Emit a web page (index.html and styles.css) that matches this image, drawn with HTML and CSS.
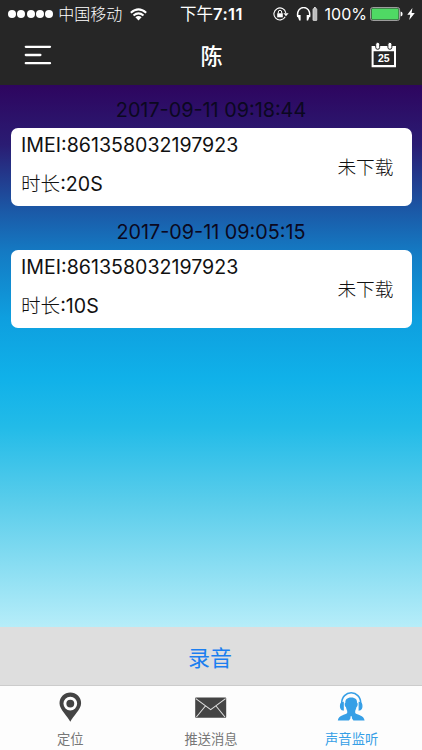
FILE: index.html
```html
<!DOCTYPE html>
<html lang="zh-CN">
<head>
  <meta charset="UTF-8" />
  <meta name="viewport" content="width=device-width, initial-scale=1" />
  <title>声音监听</title>
  <link rel="stylesheet" href="styles.css">
</head>
<body>
  <div class="app">
    <div class="status-bar">
      <div class="status-left">
        <div class="signal"><i></i><i></i><i></i><i></i><i></i></div>
        <span class="carrier">中国移动</span>
        <svg class="wifi" width="17" height="13" viewBox="0 0 17 13" fill="none" stroke="#fff" stroke-width="2">
          <path d="M.8 4.8 Q8.5 -2.1 16.2 4.8" />
          <path d="M3.5 7.6 Q8.5 3.2 13.5 7.6" />
          <path d="M5.4 9.3 Q8.5 6.8 11.6 9.3 L8.5 12.4 Z" fill="#fff" stroke="none" />
        </svg>
      </div>
      <span class="time">下午<b>7:11</b></span>
      <div class="status-right">
        <svg class="lock" width="16" height="14" viewBox="0 0 16 14">
          <path d="M12.2 9.8 A6 6 0 1 1 12.8 5.8" fill="none" stroke="#fff" stroke-width="1.1" />
          <path d="M10.4 6.2 H15.6 L13 9.2 Z" fill="#fff" />
          <rect x="4.2" y="6.3" width="5.6" height="4" fill="#fff" />
          <path d="M5.3 6.5 V5 a1.7 1.7 0 0 1 3.4 0 V6.5" fill="none" stroke="#fff" stroke-width="1" />
        </svg>
        <svg class="headset" width="22" height="14" viewBox="0 0 22 14">
          <path d="M1.8 10 C-.6 -2.6 15.9 -2.6 13.5 10" fill="none" stroke="#fff" stroke-width="1.5" />
          <path d="M1.2 8 H4.6 V13.4 H3.2 Z M14.1 8 H10.7 V13.4 H12.1 Z" fill="#fff" />
          <rect x="17" y="1.6" width="3.8" height="12" rx=".6" fill="#bbb" stroke="#ddd" stroke-width=".8" />
          <rect x="18" y="0" width="1.8" height="1.3" fill="#ddd" />
        </svg>
        <span class="percent">100%</span>
        <svg class="battery" width="33" height="14" viewBox="0 0 33 14">
          <rect x=".6" y=".6" width="29" height="12.8" rx="2" fill="none" stroke="#aaa" stroke-width="1" />
          <rect x="1.6" y="1.6" width="27" height="10.8" rx="1" fill="#4fd964" />
          <path d="M30.6 4.6 q2 .2 2 2.4 t-2 2.4 z" fill="#fff" />
        </svg>
        <svg class="bolt" width="8" height="12" viewBox="0 0 8 12">
          <path d="M5.4 0 L.3 6.7 H3.3 L2.2 12 L7.8 4.9 H4.6 Z" fill="#fff" />
        </svg>
      </div>
    </div>

    <header class="nav-bar">
      <svg class="menu" width="28" height="20" viewBox="0 0 28 20" stroke="#fff" stroke-width="2.3" stroke-linecap="round">
        <path d="M1.8 1.8 H26 M1.8 10 H16.4 M1.8 18.2 H26" />
      </svg>
      <h1>陈</h1>
      <svg class="calendar" width="26" height="26" viewBox="0 0 26 26">
        <path d="M.6 4 H25 V25.2 H.6 Z M2.6 9.3 V23 H23 V9.3 Z" fill="#fff" fill-rule="evenodd" />
        <rect x="4.7" y=".3" width="4" height="7" rx="2" fill="#fff" stroke="#262626" stroke-width="1" />
        <rect x="16.9" y=".3" width="4" height="7" rx="2" fill="#fff" stroke="#262626" stroke-width="1" />
        <text x="12.8" y="19.8" text-anchor="middle">25</text>
      </svg>
    </header>

    <main class="records">
      <div class="record">
        <p class="date">2017-09-11 09:18:44</p>
        <div class="card">
          <div class="info">
            <p class="imei">IMEI:861358032197923</p>
            <p class="duration"><span>时长</span>:20S</p>
          </div>
          <span class="state">未下载</span>
        </div>
      </div>
      <div class="record">
        <p class="date">2017-09-11 09:05:15</p>
        <div class="card">
          <div class="info">
            <p class="imei">IMEI:861358032197923</p>
            <p class="duration"><span>时长</span>:10S</p>
          </div>
          <span class="state">未下载</span>
        </div>
      </div>
    </main>

    <button class="record-btn">录音</button>

    <nav class="tab-bar">
      <a class="tab">
        <svg width="30" height="30" viewBox="0 0 30 30">
          <path d="M15.3 29.8 C12.8 24 4.5 17.8 4.5 11.2 A10.8 10.8 0 0 1 26.1 11.2 C26.1 17.8 17.8 24 15.3 29.8 Z" fill="#444" />
          <circle cx="15.3" cy="11.6" r="5.4" fill="#444" stroke="#fff" stroke-width="2.9" />
        </svg>
        <span>定位</span>
      </a>
      <a class="tab">
        <svg width="32" height="30" viewBox="0 0 32 30">
          <rect x=".2" y="5.6" width="31" height="20.2" rx=".8" fill="#444" />
          <path d="M.8 6.6 L15.7 17.6 L30.6 6.6 M1.4 25 L10.4 14 M30 25 L21 14" fill="none" stroke="#ddd" stroke-width="1.1" />
        </svg>
        <span>推送消息</span>
      </a>
      <a class="tab active">
        <svg width="30" height="30" viewBox="0 0 30 30" fill="#369fe6">
          <path d="M4.6 12 C4.4 -2.9 24 -2.9 23.8 12" fill="none" stroke="#369fe6" stroke-width="1.5" />
          <path d="M6.2 10.4 V18 C2.8 17.4 2.4 11 6.2 10.4 Z M22.2 10.4 V18 C25.6 17.4 26 11 22.2 10.4 Z" stroke="#369fe6" stroke-width="1.2" />
          <path d="M14.2 5.4 C18.6 5.4 20.3 7.8 20 10.8 C21.1 10.8 20.8 14.6 19.5 15 C19.1 17 18.6 18 18.2 18.8 V21 C20 23.2 27 22.8 27.6 28.6 H16.4 L15 26.4 L14.8 24.2 H13.6 L13.4 26.4 L12 28.6 H.8 C1.4 22.8 8.4 23.2 10.2 21 V18.8 C9.8 18 9.3 17 8.9 15 C7.6 14.6 7.3 10.8 8.4 10.8 C8.1 7.8 9.8 5.4 14.2 5.4 Z" />
        </svg>
        <span>声音监听</span>
      </a>
    </nav>
  </div>
</body>
</html>
```
FILE: styles.css
```css
* {
  box-sizing: border-box;
}

body {
  margin: 0;
  font-family: Inter, "Noto Sans CJK SC", sans-serif;
  color: #111;
}

h1, p {
  margin: 0;
}

svg {
  display: block;
  flex: none;
}

.app {
  display: flex;
  flex-direction: column;
  width: 422px;
  height: 750px;
  overflow: hidden;
}

/* status bar */
.status-bar {
  display: grid;
  grid-template-columns: 1fr auto 1fr;
  align-items: center;
  height: 28px;
  padding: 0 7px 0 8px;
  background: #262626;
  color: #fff;
  font-size: 16px;
  line-height: 28px;
  white-space: nowrap;
}

.status-left,
.status-right {
  display: flex;
  align-items: center;
}

.status-right {
  justify-content: flex-end;
}

.signal {
  display: flex;
  gap: 1.3px;
}

.signal i {
  width: 8px;
  height: 8px;
  border-radius: 50%;
  background: #fff;
}

.carrier {
  margin: 0 8px 0 5px;
  font-weight: 300;
}

.time {
  font-size: 16.5px;
}

.time b {
  font-weight: 600;
  letter-spacing: 0.4px;
}

.lock {
  margin-right: 7px;
}

.percent {
  margin-left: 7px;
}

.battery {
  margin: 0 4px 0 3px;
}

/* title bar */
.nav-bar {
  display: flex;
  align-items: center;
  justify-content: space-between;
  height: 57px;
  padding: 0 25px 3px 24px;
  background: #262626;
  color: #fff;
}

.nav-bar h1 {
  padding-top: 2px;
  font-size: 22px;
  font-weight: 500;
  line-height: 30px;
}

.calendar text {
  font-family: "Liberation Sans", sans-serif;
  font-size: 10.5px;
  font-weight: bold;
  fill: #fff;
}

/* record list */
.records {
  flex: 1;
  padding: 0 10.5px;
  background: linear-gradient(#2e055f 0%, #2a1c73 11%, #1b58a6 23%, #147bc4 31%, #0e9fdf 43%, #10b1e9 54%, #22bbe8 63%, #5acdeb 77%, #b6edf9 100%);
}

.record {
  height: 121.5px;
}

.date {
  height: 43px;
  padding-top: 4px;
  font-size: 19.8px;
  line-height: 42px;
  text-align: center;
  color: #0b0820;
}

.card {
  display: flex;
  justify-content: space-between;
  height: 78px;
  padding: 0 18px 0 10.5px;
  border-radius: 7px;
  background: #fff;
}

.info p {
  height: 38px;
  font-size: 19.6px;
  line-height: 35px;
}

.info .duration {
  line-height: 37px;
}

.duration span,
.state {
  font-weight: 300;
}

.state {
  font-size: 18.7px;
  line-height: 80px;
}

.record-btn {
  height: 59px;
  padding: 0 2px 1px 0;
  border: 0;
  border-bottom: 1px solid #ccc;
  background: #dedede;
  color: #1b7ef0;
  font-family: inherit;
  font-size: 22px;
}

/* bottom tabs */
.tab-bar {
  display: grid;
  grid-template-columns: repeat(3, 1fr);
  height: 64px;
  background: #fdfdfd;
}

.tab {
  display: flex;
  flex-direction: column;
  align-items: center;
  padding-top: 6px;
  color: #777;
  font-size: 13.3px;
}

.tab span {
  margin-top: 7px;
  line-height: 20px;
}

.tab.active {
  color: #369fe6;
}
```
